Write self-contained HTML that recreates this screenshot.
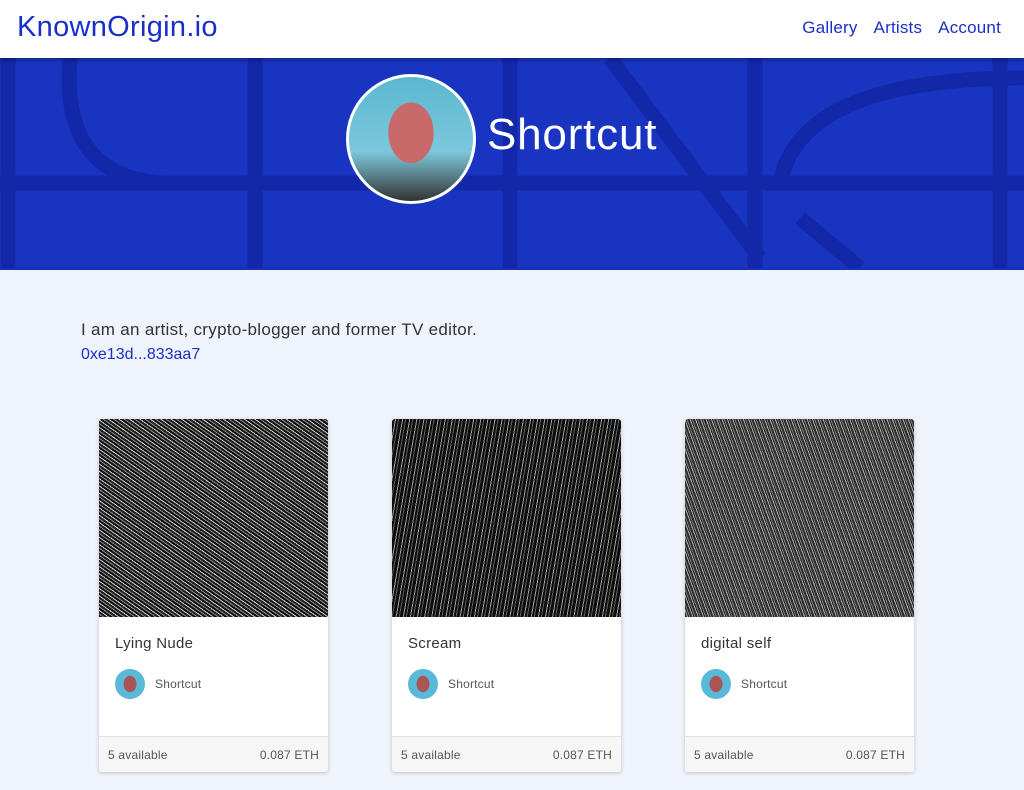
<!DOCTYPE html>
<html><head><style>
body{margin:0;background:#eff3fc;font-family:"Liberation Sans",sans-serif;width:1024px;height:790px;overflow:hidden;position:relative}
.nav{position:absolute;top:0;left:0;width:1024px;height:58px;background:#fff;box-shadow:0 2px 4px rgba(0,0,0,.3);z-index:2}
.logo{position:absolute;left:17px;top:11px;font-size:29px;color:#1a2fc8;letter-spacing:0.3px}
.links{position:absolute;right:23px;top:18px;font-size:17px;color:#1a2fc8;letter-spacing:0.2px}
.links span{margin-left:16px}
.banner{position:absolute;top:58px;left:0;width:1024px;height:210px;background:#1934c0;overflow:hidden;border-bottom:2px solid #1530b8}
.av{position:absolute;left:346px;top:74px;width:124px;height:124px;border-radius:50%;border:3px solid #fff;background:radial-gradient(ellipse 30% 40% at 50% 45%,#c86a6a 60%,transparent 62%),linear-gradient(180deg,#5ab8d0 0%,#7cc8dc 60%,#333 100%);z-index:1}
.name{position:absolute;left:487px;top:110px;font-size:44px;color:#fff;letter-spacing:0.8px}
.bio{position:absolute;left:81px;top:320px;font-size:17px;color:#333;letter-spacing:0.3px}
.addr{position:absolute;left:81px;top:346px;font-size:16px;color:#1a2fc8}
.card{position:absolute;top:419px;width:229px;height:353px;background:#fff;border-radius:3px;box-shadow:0 1px 4px rgba(0,0,0,.2);overflow:hidden}
.img{height:198px;background:repeating-linear-gradient(35deg,#000 0 2px,#888 2px 3px,#111 3px 5px,#ccc 5px 6px),#000;opacity:.95}
.img2{background:repeating-linear-gradient(100deg,#000 0 3px,#999 3px 4px,#000 4px 6px,#555 6px 7px)}
.img3{background:repeating-linear-gradient(70deg,#222 0 2px,#aaa 2px 3px,#111 3px 4px,#777 4px 5px)}
.t{position:absolute;left:16px;top:216px;font-size:15px;color:#333;letter-spacing:0.3px}
.a{position:absolute;left:16px;top:250px;width:30px;height:30px;border-radius:50%;background:radial-gradient(ellipse 35% 45% at 50% 50%,#a55 60%,transparent 62%),#5ab8d8}
.an{position:absolute;left:56px;top:258px;font-size:12px;color:#555;letter-spacing:0.2px}
.f{position:absolute;left:0;bottom:0;width:100%;height:35px;background:#f6f6f6;border-top:1px solid #e2e2e2;font-size:12px;color:#555;letter-spacing:0.2px}
.f .l{position:absolute;left:9px;top:11px}.f .r{position:absolute;right:9px;top:11px}
</style></head><body>
<div class="nav"><div class="logo">KnownOrigin.io</div><div class="links"><span>Gallery</span><span>Artists</span><span>Account</span></div></div>
<div class="banner"><svg width="1024" height="210" style="position:absolute;top:0;left:0" fill="none" stroke="#1228a8" stroke-width="15">
<path d="M70 0 Q60 120 165 125"/><line x1="0" y1="125" x2="1024" y2="125"/><line x1="8" y1="0" x2="8" y2="210"/><line x1="255" y1="0" x2="255" y2="210"/><line x1="510" y1="0" x2="510" y2="210"/><line x1="755" y1="0" x2="755" y2="210"/><line x1="1000" y1="0" x2="1000" y2="210"/><path d="M610 0 L760 200"/><path d="M1024 20 Q800 20 780 125"/><path d="M800 160 L860 210"/></svg></div>
<div class="av"></div><div class="name">Shortcut</div>
<div class="bio">I am an artist, crypto-blogger and former TV editor.</div>
<div class="addr">0xe13d...833aa7</div>
<div class="card" style="left:99px"><div class="img"></div><div class="t">Lying Nude</div><div class="a"></div><div class="an">Shortcut</div><div class="f"><span class="l">5 available</span><span class="r">0.087 ETH</span></div></div>
<div class="card" style="left:392px"><div class="img img2"></div><div class="t">Scream</div><div class="a"></div><div class="an">Shortcut</div><div class="f"><span class="l">5 available</span><span class="r">0.087 ETH</span></div></div>
<div class="card" style="left:685px"><div class="img img3"></div><div class="t">digital self</div><div class="a"></div><div class="an">Shortcut</div><div class="f"><span class="l">5 available</span><span class="r">0.087 ETH</span></div></div>
</body></html>
